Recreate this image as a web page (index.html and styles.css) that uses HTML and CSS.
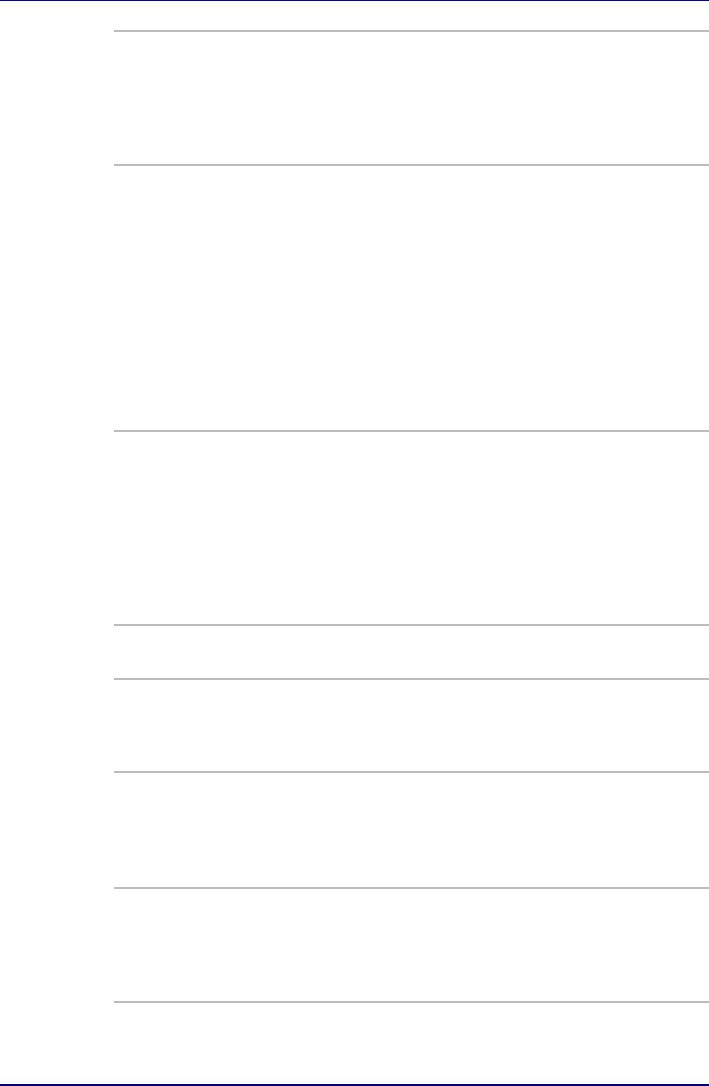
FILE: index.html
```html
<!DOCTYPE html>
<html lang="en">
<head>
    <meta charset="UTF-8">
    <meta name="viewport" content="width=device-width, initial-scale=1.0">
    <title>Manual Page</title>
    <link rel="stylesheet" href="styles.css">
</head>
<body>
    <div class="page">
        <!-- Table rows, text left empty as in the page -->
        <div class="table">
            <div class="row row-a"></div>
            <div class="row row-b"></div>
            <div class="row row-c"></div>
            <div class="row row-d"></div>
            <div class="row row-e"></div>
            <div class="row row-f"></div>
            <div class="row row-g"></div>
            <div class="row row-last"></div>
        </div>
    </div>
</body>
</html>
```

FILE: styles.css
```css
body {
    font-family: Arial, "Liberation Sans", sans-serif;
    margin: 0;
    padding: 0;
    background: #fff;
}
.page {
    height: 1086px;
    box-sizing: border-box;
    border-top: 1px solid #0000a0;
    border-bottom: 2px solid #000078;
    display: flex;
    flex-direction: column;
}
.table {
    margin-top: 29px;
    margin-left: 114px;
    flex: 1;
    display: flex;
    flex-direction: column;
}
.row {
    box-sizing: border-box;
    border-top: 2px solid #bcbcbc;
}
.row-a { height: 134px; }
.row-b { height: 266px; }
.row-c { height: 194px; }
.row-d { height: 54px; }
.row-e { height: 93px; }
.row-f { height: 116px; }
.row-g { height: 114px; }
.row-last { flex: 1; }
```
